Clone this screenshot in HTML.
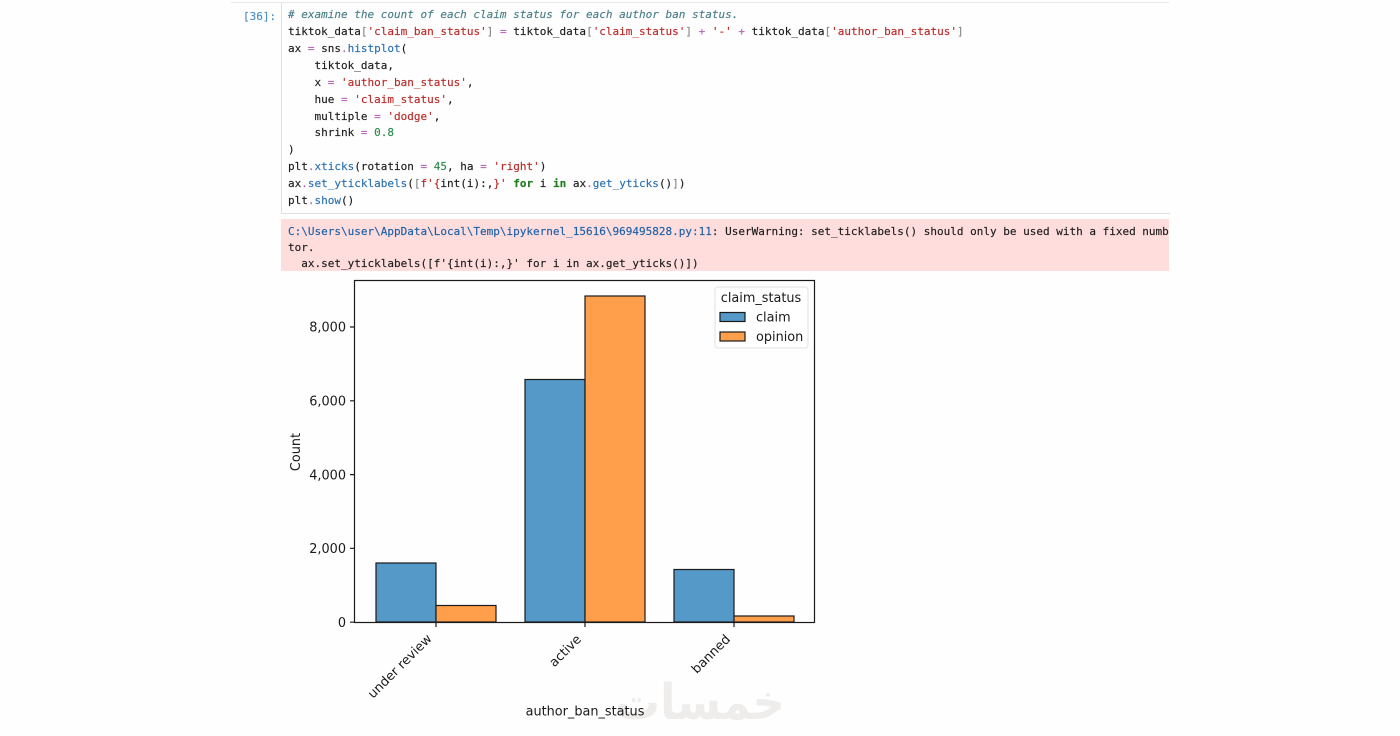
<!DOCTYPE html>
<html><head><meta charset="utf-8"><style>
html,body{margin:0;padding:0;background:#fefefe;width:1400px;height:736px;overflow:hidden}
.abs{position:absolute}
pre{margin:0;font-family:"DejaVu Sans Mono","Liberation Mono",monospace;font-size:11px;color:#1c1c1c;white-space:pre;-webkit-text-stroke:.15px}
.c{color:#4a7f88;font-style:italic}.s{color:#ba2a2a}.o{color:#b564b5}.f{color:#2a70b0}.n{color:#2f8a4a}.k{color:#1f7a1f;font-weight:bold}.b{color:#8a8a8a}
.p{color:#1a5fa8}
</style></head><body>
<div class="abs" style="left:231px;top:2px;width:938px;height:1px;background:#e8e8e8"></div>
<pre class="abs" style="left:243px;top:8px;line-height:17px;color:#4a8fc4;">[36]:</pre>
<div class="abs" style="left:281px;top:3px;width:888px;height:210px;border-left:1px solid #e0e0e0;border-bottom:1px solid #e0e0e0;box-sizing:content-box"></div>
<pre class="abs" style="left:288px;top:7px;line-height:16.92px"><span class="c"># examine the count of each claim status for each author ban status.</span>
tiktok_data<span class="b">[</span><span class="s">'claim_ban_status'</span><span class="b">]</span> <span class="o">=</span> tiktok_data<span class="b">[</span><span class="s">'claim_status'</span><span class="b">]</span> <span class="o">+</span> <span class="s">'-'</span> <span class="o">+</span> tiktok_data<span class="b">[</span><span class="s">'author_ban_status'</span><span class="b">]</span>
ax <span class="o">=</span> sns<span class="o">.</span><span class="f">histplot</span>(
    tiktok_data,
    x <span class="o">=</span> <span class="s">'author_ban_status'</span>,
    hue <span class="o">=</span> <span class="s">'claim_status'</span>,
    multiple <span class="o">=</span> <span class="s">'dodge'</span>,
    shrink <span class="o">=</span> <span class="n">0.8</span>
)
plt<span class="o">.</span><span class="f">xticks</span>(rotation <span class="o">=</span> <span class="n">45</span>, ha <span class="o">=</span> <span class="s">'right'</span>)
ax<span class="o">.</span><span class="f">set_yticklabels</span>(<span class="b">[</span><span class="s">f'{</span>int(i):,<span class="s">}'</span> <span class="k">for</span> i <span class="k">in</span> ax<span class="o">.</span><span class="f">get_yticks</span>()<span class="b">]</span>)
plt<span class="o">.</span><span class="f">show</span>()</pre>
<div class="abs" style="left:281px;top:219px;width:888px;height:52px;background:#ffdddd;overflow:hidden">
<pre class="abs" style="left:7px;top:5px;line-height:16.2px"><span class="p">C:\Users\user\AppData\Local\Temp\ipykernel_15616\969495828.py:11</span>: UserWarning: set_ticklabels() should only be used with a fixed number of ticks, i.e. after set_ticks() or using a FixedLocator.
tor.
  ax.set_yticklabels([f'{int(i):,}' for i in ax.get_yticks()])</pre>
</div>
<div class="abs" style="left:617px;top:677px;width:166px;text-align:center;direction:rtl;font-family:'DejaVu Sans',sans-serif;font-weight:bold;font-size:38px;line-height:50px;color:#efecec;transform:scale(1.18,1.3);white-space:nowrap">خمسات</div>
<svg class="abs" style="left:0;top:0" width="1400" height="736" viewBox="0 0 1400 736" font-family="'DejaVu Sans',sans-serif" font-size="12.85" fill="#1a1a1a">
<g stroke="#1a1a1a" stroke-width="1.2">
<rect x="376" y="563" width="60" height="59" fill="#5499c7"/>
<rect x="436" y="605.5" width="60" height="16.5" fill="#ff9f4b"/>
<rect x="525" y="379.5" width="60" height="242.5" fill="#5499c7"/>
<rect x="585" y="296" width="60" height="326" fill="#ff9f4b"/>
<rect x="674" y="569.5" width="60" height="52.5" fill="#5499c7"/>
<rect x="734" y="616" width="60" height="6" fill="#ff9f4b"/>
<rect x="354.5" y="280.5" width="460" height="342" fill="none"/>
<path d="M350 327H354M350 400.8H354M350 474.6H354M350 548.3H354M350 622.2H354M436 622V627M585 622V627M734 622V627" fill="none"/>
</g>
<g text-anchor="end">
<text x="346" y="331.5">8,000</text>
<text x="346" y="405.5">6,000</text>
<text x="346" y="479.5">4,000</text>
<text x="346" y="553">2,000</text>
<text x="346" y="627">0</text>
</g>
<text transform="translate(300 452) rotate(-90)" text-anchor="middle">Count</text>
<text x="585" y="715.5" text-anchor="middle">author_ban_status</text>
<text transform="translate(432.5 639.5) rotate(-45)" text-anchor="end">under review</text>
<text transform="translate(582 640) rotate(-45)" text-anchor="end">active</text>
<text transform="translate(731 640) rotate(-45)" text-anchor="end">banned</text>
<rect x="715" y="287" width="93" height="61" rx="3" fill="#fff" fill-opacity=".85" stroke="#e2e2e2"/>
<text x="761" y="302" text-anchor="middle">claim_status</text>
<rect x="720" y="312.5" width="25" height="9" fill="#5499c7" stroke="#1a1a1a" stroke-width="1.2"/>
<rect x="720" y="332" width="25" height="9" fill="#ff9f4b" stroke="#1a1a1a" stroke-width="1.2"/>
<text x="756" y="321.5">claim</text>
<text x="756" y="341">opinion</text>
</svg>
</body></html>
